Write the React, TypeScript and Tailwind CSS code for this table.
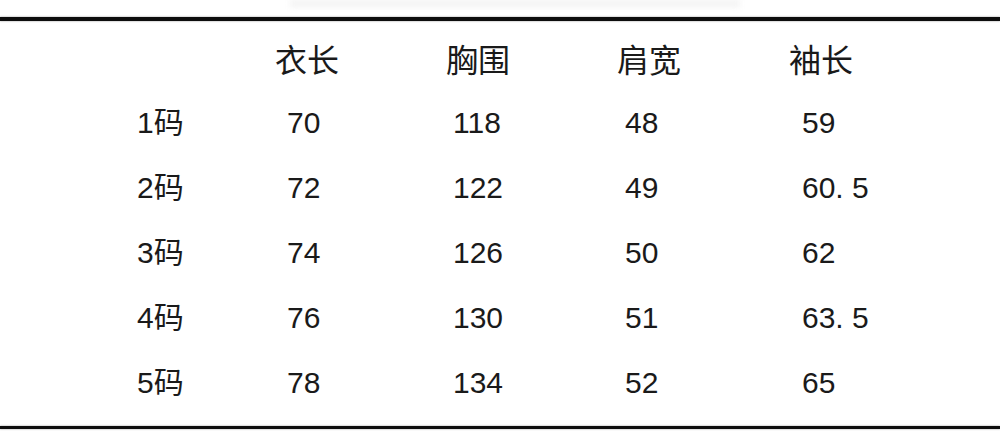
const headers = ['衣长', '胸围', '肩宽', '袖长'];

const rows = [
  { size: '1码', values: ['70', '118', '48', '59'] },
  { size: '2码', values: ['72', '122', '49', '60. 5'] },
  { size: '3码', values: ['74', '126', '50', '62'] },
  { size: '4码', values: ['76', '130', '51', '63. 5'] },
  { size: '5码', values: ['78', '134', '52', '65'] },
];

// value cells sit a little right of their header
const valuePad = ['pl-[12px]', 'pl-[7px]', 'pl-[8px]', 'pl-[13px]'];

export default function App() {
  return (
    <div
      className="relative w-[1000px] h-[443px] bg-white overflow-hidden text-[#1a1a1a]"
      style={{ fontFamily: '"Liberation Sans", "Noto Sans CJK SC", sans-serif' }}
    >
      {/* faded text cut off at the top edge */}
      <div className="absolute left-[290px] top-0 w-[450px] h-[7px] bg-[#f2f2f2] blur-[3px]" />

      <div className="flex flex-col">
        <div className="mt-[17px] h-[4px] bg-[#0d0d0d] shadow-[0_0_2px_#888]" />

        <div className="h-[69px] pt-[10px] pl-[137px] grid grid-cols-[138px_171px_171px_172px_1fr] items-center">
          <div />
          {headers.map((h) => (
            <div key={h} className="text-[32px] leading-none">
              {h}
            </div>
          ))}
        </div>

        {rows.map((r) => (
          <div
            key={r.size}
            className="h-[65px] pl-[137px] grid grid-cols-[138px_171px_171px_172px_1fr] items-center text-[30px] leading-none"
          >
            <div>{r.size}</div>
            {r.values.map((v, i) => (
              <div key={i} className={valuePad[i]}>
                {v}
              </div>
            ))}
          </div>
        ))}

        <div className="mt-[11px] h-[3px] bg-[#0d0d0d] shadow-[0_0_2px_#888]" />
      </div>
    </div>
  );
}
